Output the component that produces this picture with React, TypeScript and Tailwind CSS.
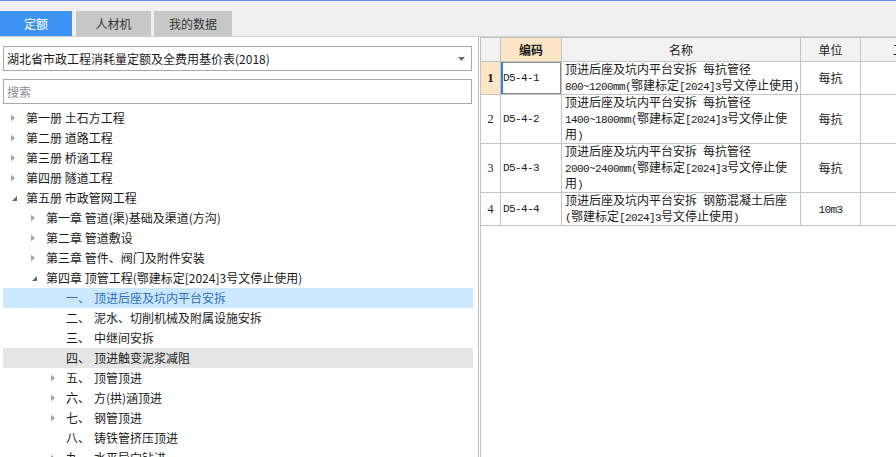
import type { FC } from "react";

type TreeNode = {
  level: number;
  arrow?: "open" | "closed";
  label: string;
  num?: string;
  state?: "selected" | "hover";
};

const tree: TreeNode[] = [
  { level: 0, arrow: "closed", label: "第一册 土石方工程" },
  { level: 0, arrow: "closed", label: "第二册 道路工程" },
  { level: 0, arrow: "closed", label: "第三册 桥涵工程" },
  { level: 0, arrow: "closed", label: "第四册 隧道工程" },
  { level: 0, arrow: "open", label: "第五册 市政管网工程" },
  { level: 1, arrow: "closed", label: "第一章 管道(渠)基础及渠道(方沟)" },
  { level: 1, arrow: "closed", label: "第二章 管道敷设" },
  { level: 1, arrow: "closed", label: "第三章 管件、阀门及附件安装" },
  { level: 1, arrow: "open", label: "第四章 顶管工程(鄂建标定[2024]3号文停止使用)" },
  { level: 2, num: "一、", label: "顶进后座及坑内平台安拆", state: "selected" },
  { level: 2, num: "二、", label: "泥水、切削机械及附属设施安拆" },
  { level: 2, num: "三、", label: "中继间安拆" },
  { level: 2, num: "四、", label: "顶进触变泥浆减阻", state: "hover" },
  { level: 2, arrow: "closed", num: "五、", label: "顶管顶进" },
  { level: 2, arrow: "closed", num: "六、", label: "方(拱)涵顶进" },
  { level: 2, arrow: "closed", num: "七、", label: "钢管顶进" },
  { level: 2, num: "八、", label: "铸铁管挤压顶进" },
  { level: 2, arrow: "closed", num: "九、", label: "水平导向钻进" },
];

const rows = [
  {
    no: "1",
    code: "D5-4-1",
    name: ["顶进后座及坑内平台安拆 每抗管径", "800~1200mm(鄂建标定[2024]3号文停止使用)"],
    unit: "每抗",
    h: "h-[32px]",
  },
  {
    no: "2",
    code: "D5-4-2",
    name: ["顶进后座及坑内平台安拆 每抗管径", "1400~1800mm(鄂建标定[2024]3号文停止使", "用)"],
    unit: "每抗",
    h: "h-[48px]",
  },
  {
    no: "3",
    code: "D5-4-3",
    name: ["顶进后座及坑内平台安拆 每抗管径", "2000~2400mm(鄂建标定[2024]3号文停止使", "用)"],
    unit: "每抗",
    h: "h-[47px]",
  },
  {
    no: "4",
    code: "D5-4-4",
    name: ["顶进后座及坑内平台安拆 钢筋混凝土后座", "(鄂建标定[2024]3号文停止使用)"],
    unit: "10m3",
    h: "h-[33px]",
  },
];

// half-width runs get a 6px-advance mono face, like the grid's SimSun
const Mixed: FC<{ text: string }> = ({ text }) => (
  <>
    {text.split(/([\x20-\x7E]+)/).map((part, i) =>
      /^[\x20-\x7E]+$/.test(part) ? (
        <span key={i} className="font-['Liberation_Mono',monospace] text-[11px] tracking-[-0.6px] whitespace-pre">
          {part}
        </span>
      ) : (
        <span key={i}>{part}</span>
      ),
    )}
  </>
);

const Arrow: FC<{ kind?: "open" | "closed" }> = ({ kind }) => {
  if (!kind) return <span className="w-[16px] shrink-0" />;
  return (
    <span className="w-[16px] shrink-0 flex items-center">
      {kind === "closed" ? (
        <svg width="6" height="8" viewBox="0 0 6 8">
          <path d="M1 0.5 L5 4 L1 7.5 Z" fill="#a6a6a6" />
        </svg>
      ) : (
        <svg width="7" height="7" viewBox="0 0 7 7" className="ml-[1px]">
          <path d="M6 1 L6 6 L1 6 Z" fill="#646464" />
        </svg>
      )}
    </span>
  );
};

const TreeRow: FC<{ node: TreeNode }> = ({ node }) => {
  const pad = node.level === 0 ? "pl-[7px]" : node.level === 1 ? "pl-[27px]" : "pl-[47px]";
  const bg =
    node.state === "selected"
      ? "bg-[#cce8ff] text-[#2f6fbf]"
      : node.state === "hover"
        ? "bg-[#e5e5e5] text-[#1a1a1a]"
        : "text-[#1a1a1a]";
  return (
    <div className={`h-[20px] shrink-0 flex items-center whitespace-nowrap ${pad} ${bg}`}>
      <Arrow kind={node.arrow} />
      {node.num ? (
        <>
          <span className="w-[28px]">{node.num}</span>
          <span>{node.label}</span>
        </>
      ) : (
        <span>{node.label}</span>
      )}
    </div>
  );
};

export default function App() {
  return (
    <div className="w-[896px] h-[457px] overflow-hidden bg-[#f0f0f0] text-[12px] font-['Noto_Sans_CJK_SC','Microsoft_YaHei',sans-serif] flex flex-col">
      <div className="h-[1px] bg-[#5b8fd9] shrink-0" />
      {/* tabs */}
      <div className="h-[36px] flex items-end gap-[3px] border-b border-[#cfcfcf] shrink-0">
        <div className="w-[72px] h-[25px] bg-[#3d93f5] text-white flex items-center justify-center mr-[1px]">
          定额
        </div>
        <div className="w-[75px] h-[25px] bg-[#c8c8c8] text-[#333] flex items-center justify-center">
          人材机
        </div>
        <div className="w-[78px] h-[25px] bg-[#c8c8c8] text-[#333] flex items-center justify-center">
          我的数据
        </div>
      </div>

      <div className="flex flex-1 min-h-0">
        {/* left panel */}
        <div className="w-[479px] shrink-0 bg-white border-r border-[#bdbdbd] flex flex-col pl-[3px] pr-[5px] pt-[9px] overflow-hidden">
          <div className="h-[25px] w-[469px] shrink-0 border border-[#a9a9a9] flex items-center justify-between pl-[3px] pr-[6px] text-[#1a1a1a]">
            <span>湖北省市政工程消耗量定额及全费用基价表(2018)</span>
            <svg width="7" height="4" viewBox="0 0 7 4">
              <path d="M0 0 L7 0 L3.5 4 Z" fill="#6b6b6b" />
            </svg>
          </div>
          <div className="h-[25px] w-[469px] shrink-0 mt-[8px] border border-[#a9a9a9] flex items-center pl-[3px] text-[#8c8c8c]">
            搜索
          </div>
          <div className="mt-[4px] w-[470px] shrink-0 flex flex-col">
            {tree.map((n, i) => (
              <TreeRow key={i} node={n} />
            ))}
          </div>
        </div>

        {/* right panel */}
        <div className="flex-1 bg-white pl-[1px] overflow-hidden">
          <table className="table-fixed border-collapse w-[481px] text-[#1a1a1a] font-['Noto_Sans_CJK_SC','SimSun',sans-serif]">
            <colgroup>
              <col className="w-[20px]" />
              <col className="w-[61px]" />
              <col className="w-[239px]" />
              <col className="w-[60px]" />
              <col className="w-[101px]" />
            </colgroup>
            <thead>
              <tr className="h-[24px] bg-[#f2f2f2]">
                <th className="border border-[#c4c4c4] font-normal" />
                <th className="border border-[#c4c4c4] bg-[#fde6c6] font-bold">编码</th>
                <th className="border border-[#c4c4c4] font-normal">名称</th>
                <th className="border border-[#c4c4c4] font-normal">单位</th>
                <th className="border border-[#c4c4c4] font-normal whitespace-nowrap overflow-hidden text-center">
                  工程量
                </th>
              </tr>
            </thead>
            <tbody>
              {rows.map((r, i) => (
                <tr key={r.no} className={r.h}>
                  <td
                    className={`border border-[#c4c4c4] text-center font-['Liberation_Serif',serif] ${
                      i === 0 ? "bg-[#fde6c6] font-bold text-[13px]" : "text-[12px]"
                    }`}
                  >
                    {r.no}
                  </td>
                  <td
                    className={`border border-[#c4c4c4] pl-[2px] font-['Liberation_Mono',monospace] text-[11px] tracking-[-0.6px] ${
                      i === 0 ? "shadow-[inset_2px_0_0_#3a7fd8,inset_0_0_0_1px_#8a8a8a]" : ""
                    }`}
                  >
                    {r.code}
                  </td>
                  <td className="border border-[#c4c4c4] pl-[3px] leading-[14px] whitespace-nowrap overflow-hidden">
                    {r.name.map((l, j) => (
                      <div key={j}>
                        <Mixed text={l} />
                      </div>
                    ))}
                  </td>
                  <td className="border border-[#c4c4c4] text-center">
                    <Mixed text={r.unit} />
                  </td>
                  <td className="border border-[#c4c4c4]" />
                </tr>
              ))}
            </tbody>
          </table>
          <div className="h-full w-[1px] bg-[#c4c4c4]" />
        </div>
      </div>
    </div>
  );
}
